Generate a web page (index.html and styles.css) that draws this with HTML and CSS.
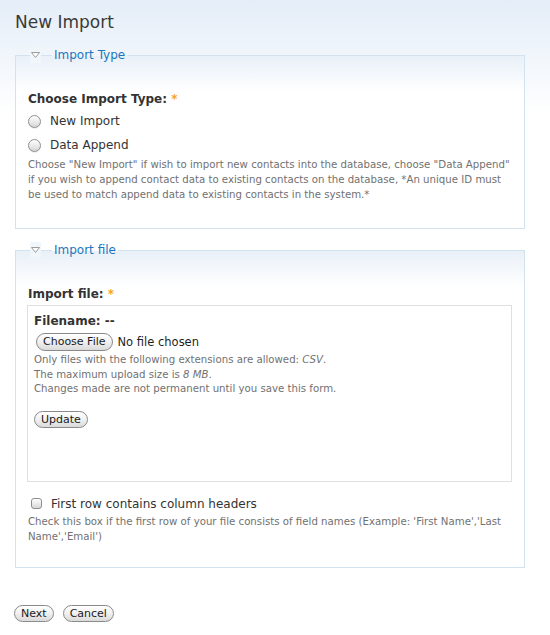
FILE: index.html
```html
<!DOCTYPE html>
<html lang="en">
<head>
<meta charset="utf-8">
<title>New Import</title>
<link rel="stylesheet" href="styles.css">
</head>
<body>
<div class="page">
  <h1 class="title">New Import</h1>

  <fieldset class="group">
    <legend class="group-legend"><span class="arrow"><svg width="11" height="16" viewBox="0 0 11 16"><path d="M1.5 5.5 L9.5 5.5 L5.5 10.5 Z" fill="#fdfdfd" stroke="#9c9c9c" stroke-width="1" stroke-linejoin="round"/></svg></span>Import Type</legend>
    <div class="label">Choose Import Type: <span class="req">*</span></div>
    <div class="options">
      <label class="option"><input class="radio" type="radio" name="type"> New Import</label>
      <label class="option"><input class="radio" type="radio" name="type"> Data Append</label>
    </div>
    <div class="desc">Choose "New Import" if wish to import new contacts into the database, choose "Data Append" if you wish to append contact data to existing contacts on the database, *An unique ID must be used to match append data to existing contacts in the system.*</div>
  </fieldset>

  <fieldset class="group group-file">
    <legend class="group-legend"><span class="arrow"><svg width="11" height="16" viewBox="0 0 11 16"><path d="M1.5 5.5 L9.5 5.5 L5.5 10.5 Z" fill="#fdfdfd" stroke="#9c9c9c" stroke-width="1" stroke-linejoin="round"/></svg></span>Import file</legend>
    <div class="label">Import file: <span class="req">*</span></div>
    <div class="file-box">
      <div class="filename">Filename: --</div>
      <div class="file-row">
        <button class="btn" type="button">Choose File</button>
        <span class="file-status">No file chosen</span>
      </div>
      <div class="desc file-desc">Only files with the following extensions are allowed: <em>CSV</em>.<br>The maximum upload size is <em>8 MB</em>.<br>Changes made are not permanent until you save this form.</div>
      <button class="btn btn-update" type="button">Update</button>
    </div>
    <label class="check-row"><input class="check" type="checkbox"> First row contains column headers</label>
    <div class="desc check-desc">Check this box if the first row of your file consists of field names (Example: 'First Name','Last Name','Email')</div>
  </fieldset>

  <div class="actions">
    <button class="btn" type="button">Next</button>
    <button class="btn" type="button">Cancel</button>
  </div>
</div>
</body>
</html>
```

FILE: styles.css
```css
* {
  box-sizing: border-box;
}

html,
body {
  margin: 0;
}

body {
  min-height: 635px;
  background: #fff linear-gradient(#e4edf8 0, #fff 115px) no-repeat;
  font-family: "DejaVu Sans", Verdana, sans-serif;
  font-size: 12px;
  line-height: 16px;
  color: #333;
}

.page {
  padding: 12px 25px 20px 15px;
}

.title {
  margin: 0 0 15px 0;
  font-size: 17px;
  line-height: 20px;
  font-weight: normal;
  color: #3a3a3a;
}

.group {
  min-width: 0;
  margin: 0 0 13px;
  padding: 28px 9px 26px 12px;
  border: 1px solid #d2e2ef;
  background: linear-gradient(#e9f0f8, #fff 36px);
}

.group-file {
  padding-bottom: 23px;
}

.group-legend {
  position: relative;
  margin-left: 24px;
  padding: 0 2px;
  font-size: 12px;
  line-height: 16px;
  color: #1c76bd;
}

.arrow {
  position: absolute;
  left: -22px;
  top: 0;
  width: 11px;
  height: 16px;
  background: #f1f6fb;
}

.arrow svg {
  display: block;
}

.label {
  font-weight: bold;
  color: #333;
}

.req {
  color: #f7a425;
}

.options {
  display: flex;
  flex-direction: column;
  gap: 8px;
  margin-top: 6px;
}

.option {
  display: flex;
  align-items: center;
  gap: 9px;
}

.radio {
  appearance: none;
  -webkit-appearance: none;
  width: 13px;
  height: 13px;
  margin: 0;
  border: 1px solid #8e8e8e;
  border-radius: 50%;
  background: linear-gradient(#ffffff, #e9e9e9 55%, #d6d6d6);
  box-shadow: 0 1px 1px rgba(0, 0, 0, 0.08);
}

.desc {
  margin-top: 4px;
  font-size: 10.2px;
  line-height: 15px;
  color: #717171;
}

.file-box {
  margin: 3px 3px 0 -1px;
  padding: 7px 6px 53px;
  border: 1px solid #e0e0e0;
  background: #fff;
}

.filename {
  font-weight: bold;
  color: #333;
}

.file-row {
  display: flex;
  align-items: center;
  gap: 5px;
  margin: 4px 0 0 2px;
}

.file-status {
  font-size: 11.5px;
  color: #1e1e1e;
}

.file-desc {
  margin-top: 2px;
  line-height: 14.5px;
}

.btn {
  height: 18px;
  padding: 0 6px;
  border: 1px solid #8a8a8a;
  border-radius: 9px;
  background: linear-gradient(#ffffff, #f0f0f0 50%, #dadada);
  font-family: "DejaVu Sans", Verdana, sans-serif;
  font-size: 11px;
  line-height: 16px;
  color: #1a1a1a;
}

.btn-update {
  display: block;
  height: 17px;
  margin-top: 14px;
}

.check-row {
  display: flex;
  align-items: center;
  gap: 9px;
  margin-top: 14px;
}

.check {
  appearance: none;
  -webkit-appearance: none;
  width: 11px;
  height: 11px;
  margin: 0 0 0 3px;
  border: 1px solid #8e8e8e;
  border-radius: 3px;
  background: linear-gradient(#ffffff, #e9e9e9 55%, #d6d6d6);
}

.check-desc {
  margin-top: 2px;
}

.actions {
  display: flex;
  gap: 9px;
  margin: 37px 0 0 -1px;
}

.actions .btn {
  height: 17px;
}
```
